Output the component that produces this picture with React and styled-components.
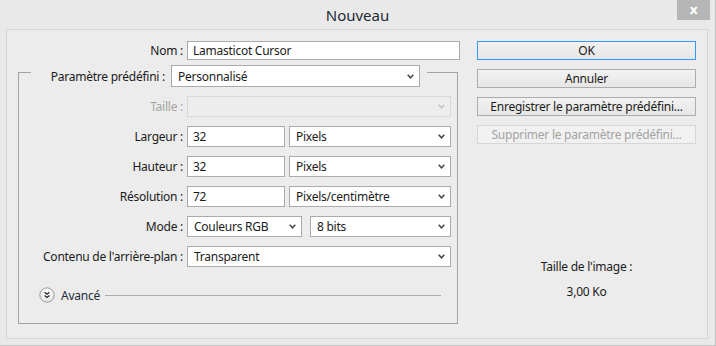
import React from 'react';
import styled, { createGlobalStyle } from 'styled-components';

const GlobalStyle = createGlobalStyle`
	html, body {
		margin: 0;
		padding: 0;
		background: #e8e8e8;
	}
	body {
		font-family: 'Noto Sans', 'Open Sans', sans-serif;
		font-size: 12px;
		letter-spacing: -0.25px;
		color: #1b1b1b;
	}
`;

const Chevron = ({ disabled }) => (
	<svg width='7' height='5' viewBox='0 0 7 5'>
		<path
			d='M0.7 0.8 L3.5 3.8 L6.3 0.8'
			fill='none'
			stroke={disabled ? '#c4c4c4' : '#4a4a4a'}
			strokeWidth='1.6'
		/>
	</svg>
);

const AdvancedIcon = () => (
	<svg width='16' height='16' viewBox='0 0 16 16'>
		<defs>
			<radialGradient id='adv' cx='50%' cy='35%' r='60%'>
				<stop offset='0%' stopColor='#ffffff' />
				<stop offset='100%' stopColor='#e4e4e4' />
			</radialGradient>
		</defs>
		<circle cx='8' cy='8' r='7.2' fill='url(#adv)' stroke='#9c9c9c' strokeWidth='1' />
		<path
			d='M5.6 5.2 L8 7.2 L10.4 5.2 M5.6 8.4 L8 10.4 L10.4 8.4'
			fill='none'
			stroke='#2a2a2a'
			strokeWidth='1.3'
		/>
	</svg>
);

const Select = ({ value, width, height = 21, disabled }) => (
	<SelectBox $width={width} $height={height} $disabled={disabled}>
		<span>{value}</span>
		<Chevron disabled={disabled} />
	</SelectBox>
);

const Field = ({ label, disabled, children, gap }) => (
	<FieldRow>
		<FieldLabel $disabled={disabled}>{label}</FieldLabel>
		<Controls $gap={gap}>{children}</Controls>
	</FieldRow>
);

export default function App() {
	return (
		<>
			<GlobalStyle />
			<Window>
				<TitleBar>
					<Title>Nouveau</Title>
					<CloseButton>x</CloseButton>
				</TitleBar>
				<Panel>
					<LeftColumn>
						<NameRow>
							<NameLabel>Nom :</NameLabel>
							<TextInput $width={273} $height={19}>
								Lamasticot Cursor
							</TextInput>
						</NameRow>
						<GroupBox>
							<GroupHeader>
								<LeftSegment />
								<HeaderLabel>Paramètre prédéfini :</HeaderLabel>
								<Select value='Personnalisé' width={249} height={22} />
								<RightSegment />
							</GroupHeader>
							<GroupBody>
								<Field label='Taille :' disabled>
									<Select value='' width={264} disabled />
								</Field>
								<Field label='Largeur :'>
									<TextInput $width={98}>32</TextInput>
									<Select value='Pixels' width={162} />
								</Field>
								<Field label='Hauteur :'>
									<TextInput $width={98}>32</TextInput>
									<Select value='Pixels' width={162} />
								</Field>
								<Field label='Résolution :'>
									<TextInput $width={98}>72</TextInput>
									<Select value='Pixels/centimètre' width={162} />
								</Field>
								<Field label='Mode :' gap={8}>
									<Select value='Couleurs RGB' width={115} />
									<Select value='8 bits' width={141} />
								</Field>
								<Field label="Contenu de l'arrière-plan :">
									<Select value='Transparent' width={264} />
								</Field>
								<AdvancedRow>
									<AdvancedIcon />
									<span>Avancé</span>
									<Rule />
								</AdvancedRow>
							</GroupBody>
						</GroupBox>
					</LeftColumn>
					<RightColumn>
						<Button $primary>OK</Button>
						<Button>Annuler</Button>
						<Button>Enregistrer le paramètre prédéfini...</Button>
						<Button $disabled>Supprimer le paramètre prédéfini...</Button>
						<SizeInfo>
							<span>Taille de l'image :</span>
							<span>3,00 Ko</span>
						</SizeInfo>
					</RightColumn>
				</Panel>
			</Window>
		</>
	);
}

const Window = styled.div`
	width: 716px;
	height: 346px;
	box-sizing: border-box;
	display: flex;
	flex-direction: column;
	background: #e9e9e9;
	border-right: 1px solid #c2c2c2;
	border-bottom: 1px solid #c2c2c2;
	overflow: hidden;
`;

const TitleBar = styled.div`
	height: 29px;
	display: grid;
	grid-template-columns: 1fr auto 1fr;
	align-items: start;
`;

const Title = styled.div`
	grid-column: 2;
	font-size: 15px;
	letter-spacing: 0;
	line-height: 30px;
	color: #1e2a38;
`;

const CloseButton = styled.div`
	grid-column: 3;
	justify-self: end;
	width: 33px;
	height: 20px;
	margin-right: 5px;
	background: #b6b6b6;
	color: #ffffff;
	font-family: 'DejaVu Sans', sans-serif;
	font-weight: bold;
	font-size: 13px;
	line-height: 19px;
	text-align: center;
`;

const Panel = styled.div`
	margin-left: 6px;
	width: 702px;
	height: 310px;
	box-sizing: border-box;
	border: 1px solid #d6d6d6;
	background: #ececec;
	display: flex;
`;

const LeftColumn = styled.div`
	padding-top: 11px;
	display: flex;
	flex-direction: column;
`;

const NameRow = styled.div`
	display: flex;
	align-items: center;
	gap: 4px;
`;

const NameLabel = styled.div`
	width: 176px;
	text-align: right;
`;

const TextInput = styled.div`
	width: ${p => p.$width}px;
	height: ${p => p.$height || 21}px;
	box-sizing: border-box;
	border: 1px solid #ababab;
	background: #ffffff;
	padding-left: 5px;
	display: flex;
	align-items: center;
	white-space: nowrap;
`;

const SelectBox = styled.div`
	width: ${p => p.$width}px;
	height: ${p => p.$height}px;
	box-sizing: border-box;
	border: 1px solid ${p => (p.$disabled ? '#d9d9d9' : '#ababab')};
	background: ${p => (p.$disabled ? '#ededed' : '#ffffff')};
	padding: 0 5px 0 6px;
	display: flex;
	align-items: center;
	justify-content: space-between;
	white-space: nowrap;
`;

const GroupBox = styled.div`
	margin: 5px 0 0 11px;
	width: 440px;
`;

const GroupHeader = styled.div`
	display: flex;
	align-items: center;
	height: 22px;
`;

const Segment = styled.div`
	align-self: flex-start;
	margin-top: 7px;
	height: 15px;
	box-sizing: border-box;
	border-top: 1px solid #a3a3a3;
`;

const LeftSegment = styled(Segment)`
	width: 13px;
	border-left: 1px solid #a3a3a3;
`;

const RightSegment = styled(Segment)`
	width: 31px;
	margin-left: 7px;
	border-right: 1px solid #a3a3a3;
`;

const HeaderLabel = styled.div`
	flex: 1;
	text-align: right;
	padding-right: 6px;
`;

const GroupBody = styled.div`
	border: 1px solid #a3a3a3;
	border-top: none;
	padding: 9px 0 20px;
	display: flex;
	flex-direction: column;
	gap: 9px;
`;

const FieldRow = styled.div`
	display: grid;
	grid-template-columns: 164px auto;
	column-gap: 4px;
	align-items: center;
`;

const FieldLabel = styled.div`
	text-align: right;
	color: ${p => (p.$disabled ? '#a3a3a3' : '#1b1b1b')};
`;

const Controls = styled.div`
	display: flex;
	gap: ${p => p.$gap || 4}px;
`;

const AdvancedRow = styled.div`
	margin-top: 11px;
	height: 16px;
	padding: 0 16px 0 20px;
	display: flex;
	align-items: center;
	gap: 6px;
	color: #1d2b3a;
`;

const Rule = styled.div`
	flex: 1;
	height: 1px;
	margin-left: -1px;
	background: #aaaaaa;
`;

const RightColumn = styled.div`
	margin-left: 17px;
	padding-top: 11px;
	width: 219px;
	display: flex;
	flex-direction: column;
	gap: 9px;
`;

const Button = styled.div`
	height: 19px;
	box-sizing: border-box;
	border: 1px solid ${p => (p.$primary ? '#3399ff' : p.$disabled ? '#d6d6d6' : '#acacac')};
	background: ${p =>
		p.$disabled ? '#f1f1f1' : 'linear-gradient(#f2f2f2, #e6e6e6)'};
	color: ${p => (p.$disabled ? '#a3a3a3' : '#1b1b1b')};
	text-align: center;
	line-height: 17px;
	white-space: nowrap;
`;

const SizeInfo = styled.div`
	margin-top: 106px;
	display: flex;
	flex-direction: column;
	align-items: center;
	gap: 9px;
	line-height: 16px;
`;
